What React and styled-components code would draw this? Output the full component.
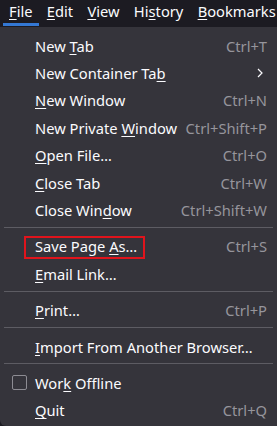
import React from "react";
import styled, { createGlobalStyle } from "styled-components";

const GlobalStyle = createGlobalStyle`
  html, body {
    margin: 0;
    padding: 0;
    background: #1c1b22;
    font-family: "Noto Sans", "DejaVu Sans", sans-serif;
    overflow: hidden;
  }
`;

const Page = styled.div`
  width: 277px;
  height: 426px;
  display: flex;
  flex-direction: column;
`;

const MenuBar = styled.div`
  display: flex;
  align-items: stretch;
  height: 26px;
  padding-left: 3px;
  gap: 2.3px;
  background: #1c1b22;
  color: #fbfbfe;
  font-size: 14.7px;
`;

const BarItem = styled.div`
  display: flex;
  align-items: center;
  padding: 0 6px 2px;
  white-space: nowrap;
  border-bottom: 3px solid ${(p) => (p.$active ? "#3478d4" : "transparent")};
  box-sizing: border-box;
`;

const Key = styled.span`
  text-decoration: underline;
  text-underline-offset: 2px;
  text-decoration-thickness: 1px;
`;

const Menu = styled.div`
  flex: 1;
  margin-top: 1px;
  padding: 5px 0 0;
  background: #35343b;
  border-bottom-left-radius: 6px;
  color: #fbfbfe;
  font-size: 14.7px;
`;

const Row = styled.div`
  position: relative;
  display: flex;
  align-items: center;
  height: 27.4px;
  padding: 0 10px 0 35px;
  white-space: nowrap;
`;

const Label = styled.span`
  flex: 1;
`;

const Shortcut = styled.span`
  color: #96959c;
`;

const Separator = styled.div`
  height: 1px;
  margin: 3px 4px 5px;
  background: #5d5c63;
`;

const Check = styled.span`
  position: absolute;
  left: 12px;
  top: 6px;
  width: 13px;
  height: 13px;
  border: 1px solid #8d8c93;
  border-radius: 2px;
`;

const Highlight = styled.div`
  position: absolute;
  left: 24px;
  top: 3px;
  width: 121px;
  height: 23px;
  border: 2px solid #e0141c;
  box-sizing: border-box;
  pointer-events: none;
`;

const Chevron = () => (
  <svg width="6" height="10" viewBox="0 0 6 10" style={{ marginRight: 4 }}>
    <path d="M1 1l4 4-4 4" fill="none" stroke="#fbfbfe" strokeWidth="1.2" />
  </svg>
);

const L = ({ pre = "", k, post = "" }) => (
  <Label>
    {pre}
    <Key>{k}</Key>
    {post}
  </Label>
);

const App = () => {
  return (
    <Page>
      <GlobalStyle />
      <MenuBar>
        <BarItem $active>
          <span>
            <Key>F</Key>ile
          </span>
        </BarItem>
        <BarItem>
          <span>
            <Key>E</Key>dit
          </span>
        </BarItem>
        <BarItem>
          <span>
            <Key>V</Key>iew
          </span>
        </BarItem>
        <BarItem>
          <span>
            Hi<Key>s</Key>tory
          </span>
        </BarItem>
        <BarItem>
          <span>
            <Key>B</Key>ookmarks
          </span>
        </BarItem>
      </MenuBar>
      <Menu>
        <Row>
          <L pre="New " k="T" post="ab" />
          <Shortcut>Ctrl+T</Shortcut>
        </Row>
        <Row>
          <L pre="New Container Ta" k="b" />
          <Chevron />
        </Row>
        <Row>
          <L k="N" post="ew Window" />
          <Shortcut>Ctrl+N</Shortcut>
        </Row>
        <Row>
          <L pre="New Private " k="W" post="indow" />
          <Shortcut>Ctrl+Shift+P</Shortcut>
        </Row>
        <Row>
          <L k="O" post="pen File…" />
          <Shortcut>Ctrl+O</Shortcut>
        </Row>
        <Row>
          <L k="C" post="lose Tab" />
          <Shortcut>Ctrl+W</Shortcut>
        </Row>
        <Row>
          <L pre="Close Win" k="d" post="ow" />
          <Shortcut>Ctrl+Shift+W</Shortcut>
        </Row>
        <Separator />
        <Row>
          <L pre="Save Page " k="A" post="s…" />
          <Shortcut>Ctrl+S</Shortcut>
          <Highlight />
        </Row>
        <Row>
          <L k="E" post="mail Link…" />
        </Row>
        <Separator />
        <Row>
          <L k="P" post="rint…" />
          <Shortcut>Ctrl+P</Shortcut>
        </Row>
        <Separator />
        <Row>
          <L k="I" post="mport From Another Browser…" />
        </Row>
        <Separator />
        <Row>
          <Check />
          <L pre="Wor" k="k" post=" Offline" />
        </Row>
        <Row>
          <L k="Q" post="uit" />
          <Shortcut>Ctrl+Q</Shortcut>
        </Row>
      </Menu>
    </Page>
  );
};

export default App;
